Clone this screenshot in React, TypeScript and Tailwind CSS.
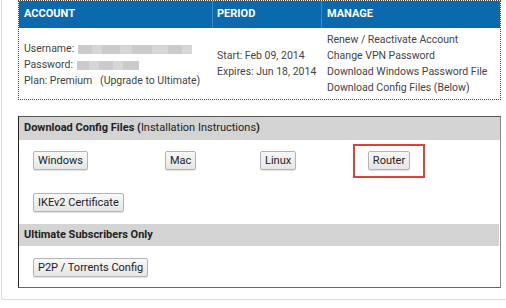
import React from "react";

const Btn: React.FC<{ children: React.ReactNode }> = ({ children }) => (
  <button
    type="button"
    className="h-[19px] px-[4px] text-[11px] leading-none text-[#222] bg-gradient-to-b from-[#f8f8f8] to-[#e6e6e6] border border-[#b4b4b4] rounded-[2px] shadow-[0_1px_1px_rgba(0,0,0,0.12)]"
  >
    {children}
  </button>
);

const Blur: React.FC<{ widths: number[] }> = ({ widths }) => (
  <span className="inline-flex h-[9px] align-middle ml-[4px]">
    {widths.map((w, i) => (
      <span
        key={i}
        className={i % 2 ? "h-full bg-[#d6d6d6]" : "h-full bg-[#cbcbcb]"}
        style={{ width: w }}
      />
    ))}
  </span>
);

export default function App() {
  return (
    <div className="w-[506px] h-[308px] bg-white font-['Roboto',sans-serif] text-[#333] overflow-hidden">
      <div className="h-[300px] ml-[1px] border-l border-b border-[#dcdcdc] rounded-bl-[3px] pl-[16px] pr-[5px]">
        {/* account table */}
        <div className="border border-dotted border-[#444]">
          <div className="flex h-[27px] bg-[#0b69ad] text-white text-[11px] font-bold">
            <div className="w-[194px] pl-[5px] flex items-center border-r border-[#3f8ac2]">ACCOUNT</div>
            <div className="w-[109px] pl-[4px] flex items-center border-r border-[#3f8ac2]">PERIOD</div>
            <div className="flex-1 pl-[5px] flex items-center">MANAGE</div>
          </div>
          <div className="flex h-[71px] text-[10.5px] leading-[16px] text-[#444]">
            <div className="w-[194px] pl-[5px] flex flex-col justify-center pt-[3px]">
              <div>
                Username:<Blur widths={[14, 10, 18, 12, 20, 16, 14, 10]} />
              </div>
              <div>
                Password:<Blur widths={[12, 10, 14, 10, 16]} />
              </div>
              <div className="whitespace-pre">Plan: Premium   (Upgrade to Ultimate)</div>
            </div>
            <div className="w-[109px] pl-[4px] flex flex-col justify-center">
              <div>Start: Feb 09, 2014</div>
              <div>Expires: Jun 18, 2014</div>
            </div>
            <div className="flex-1 pl-[5px] flex flex-col justify-center">
              <div>Renew / Reactivate Account</div>
              <div>Change VPN Password</div>
              <div>Download Windows Password File</div>
              <div>Download Config Files (Below)</div>
            </div>
          </div>
        </div>

        {/* config files */}
        <div className="mt-[16px] h-[172px] border border-t-[#555] border-l-[#222] border-r-[#888] border-b-[#666]">
          <div className="h-[23px] bg-[#d4d4d4] pl-[5px] flex items-center text-[11px] text-[#222]">
            <span className="font-bold">Download Config Files (</span>
            <span>Installation Instructions</span>
            <span className="font-bold">)</span>
          </div>
          <div className="pl-[14px] pt-[11px]">
            <div className="grid grid-cols-[132px_95px_93px_auto] items-center h-[19px]">
              <div className="flex"><Btn>Windows</Btn></div>
              <div className="flex"><Btn>Mac</Btn></div>
              <div className="flex"><Btn>Linux</Btn></div>
              <div className="w-[72px] h-[34px] -my-[8px] border-2 border-[#e0403a] flex items-center justify-center">
                <Btn>Router</Btn>
              </div>
            </div>
            <div className="mt-[23px] flex">
              <Btn>IKEv2 Certificate</Btn>
            </div>
          </div>
          <div className="h-[22px] mt-[12px] mr-[1px] bg-[#d4d4d4] pl-[5px] flex items-center text-[11px] font-bold text-[#222]">
            Ultimate Subscribers Only
          </div>
          <div className="pl-[14px] pt-[12px] flex">
            <Btn>P2P / Torrents Config</Btn>
          </div>
        </div>
      </div>
    </div>
  );
}
